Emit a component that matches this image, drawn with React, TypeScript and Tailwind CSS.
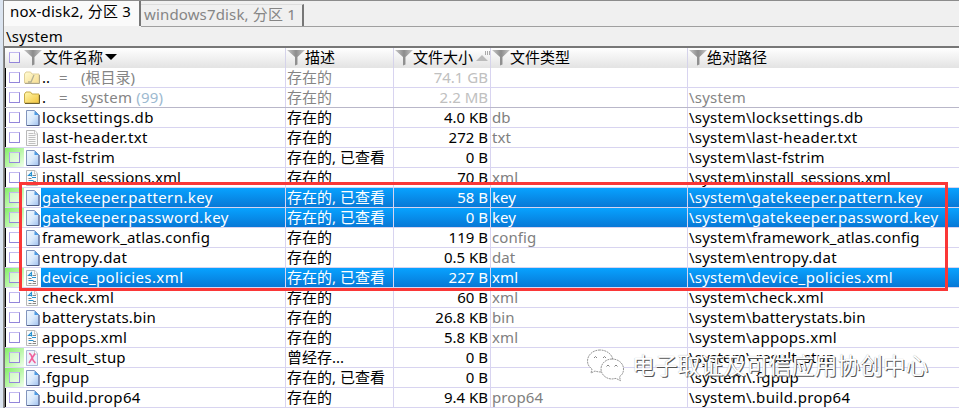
import type { ReactNode } from 'react';

type Kind = 'up' | 'folder' | 'page' | 'text' | 'xml' | 'deleted';
interface Entry {
  name: string;
  kind: Kind;
  size: string;
  type: string;
  tracking?: number;
  state?: string;
  viewed?: boolean;
  selected?: boolean;
  muted?: boolean;
}

const entries: Entry[] = [
  { name: '..', kind: 'up', size: '74.1 GB', type: '', muted: true },
  { name: '.', kind: 'folder', size: '2.2 MB', type: '', muted: true, tracking: 0.15 },
  { name: 'locksettings.db', kind: 'page', size: '4.0 KB', type: 'db', tracking: 0.34 },
  { name: 'last-header.txt', kind: 'text', size: '272 B', type: 'txt', tracking: 0.38 },
  { name: 'last-fstrim', kind: 'page', size: '0 B', type: '', viewed: true, tracking: 0.12 },
  { name: 'install_sessions.xml', kind: 'xml', size: '70 B', type: 'xml', tracking: 0.06 },
  { name: 'gatekeeper.pattern.key', kind: 'page', size: '58 B', type: 'key', viewed: true, selected: true, tracking: 0.39 },
  { name: 'gatekeeper.password.key', kind: 'page', size: '0 B', type: 'key', viewed: true, selected: true, tracking: 0.39 },
  { name: 'framework_atlas.config', kind: 'page', size: '119 B', type: 'config', tracking: 0.16 },
  { name: 'entropy.dat', kind: 'page', size: '0.5 KB', type: 'dat', tracking: 0.38 },
  { name: 'device_policies.xml', kind: 'xml', size: '227 B', type: 'xml', viewed: true, selected: true, tracking: 0.4 },
  { name: 'check.xml', kind: 'xml', size: '60 B', type: 'xml', tracking: 0.25 },
  { name: 'batterystats.bin', kind: 'page', size: '26.8 KB', type: 'bin', tracking: 0.2 },
  { name: 'appops.xml', kind: 'xml', size: '5.8 KB', type: 'xml', tracking: 0.3 },
  { name: '.result_stup', kind: 'deleted', size: '0 B', type: '', state: '曾经存...', viewed: true, tracking: 0.15 },
  { name: '.fgpup', kind: 'page', size: '0 B', type: '', viewed: true, tracking: 0.2 },
  { name: '.build.prop64', kind: 'page', size: '9.4 KB', type: 'prop64', tracking: 0.36 },
];

const columns = 'grid grid-cols-[281px_108px_97px_197px_1fr]';

function Funnel() {
  return (
    <svg width="18" height="17" viewBox="0 0 18 17" className="shrink-0">
      <defs>
        <linearGradient id="funnel" x1="0" x2="1">
          <stop offset="0" stopColor="#c8c8c8" />
          <stop offset=".5" stopColor="#8c8c8c" />
          <stop offset="1" stopColor="#c8c8c8" />
        </linearGradient>
      </defs>
      <path d="M0 1h18l-7.500 7V15.500l-2.500 1V8z" fill="url(#funnel)" />
    </svg>
  );
}

function Check() {
  return <span className="ml-1 size-[11px] shrink-0 border border-[#9284da] border-t-[#c3b9f0] border-l-[#ada0e8] bg-white/50" />;
}

function FileIcon({ kind }: { kind: Kind }) {
  if (kind === 'up' || kind === 'folder') {
    const up = kind === 'up';
    return (
      <svg width="18" height="16" viewBox="0 0 18 16" className="shrink-0" opacity={up ? 0.55 : 1}>
        <defs>
          <linearGradient id="folder" x1="0" x2="1" y1="0" y2="1">
            <stop offset="0" stopColor="#fff9b0" />
            <stop offset="1" stopColor="#f3c43c" />
          </linearGradient>
        </defs>
        <path d="M.5 4l1.500-2h4.500L8 4h7v9H.5z" fill="url(#folder)" stroke="#c8ab48" />
        <path d="M1 13.500h14.500V5" fill="none" stroke="#6d6030" />
        {up && <path d="M4 12h3l3-7" fill="none" stroke="#77713c" strokeWidth="1.300" />}
      </svg>
    );
  }
  const page = kind === 'page';
  return (
    <svg width="14" height="16" viewBox="0 0 14 16" className="ml-[2px] shrink-0">
      <defs>
        <linearGradient id="page" x1="0" x2="1" y1="0" y2="1">
          <stop offset="0" stopColor="#f0f8ff" />
          <stop offset=".5" stopColor="#dcebfc" />
          <stop offset="1" stopColor="#9dbfee" />
        </linearGradient>
      </defs>
      <path
        d={page ? 'M.5.5h8l4.500 4.500v10.500H.5z' : 'M.5.5h8.500l2.500 3v12H.5z'}
        fill={page ? 'url(#page)' : kind === 'deleted' ? '#edf2fc' : '#fafafa'}
        stroke={page ? '#8194bd' : kind === 'deleted' ? '#a9b8d8' : '#b8b8b8'}
      />
      {page && <path d="M1 15.500h12V5" fill="none" stroke="#505f88" />}
      {page
        ? <path d="M8.500 1v4H13z" fill="#4d9be4" />
        : <path d="M8.500.5v3.500h3" fill="#fff" stroke="#b8b8b8" strokeWidth=".8" />}
      {kind === 'text' && <path d="M2.500 3.500h5M2.500 5.500h7M2.500 7.500h7M2.500 9.500h7M2.500 11.500h7M2.500 13.500h7" stroke="#c0c0c0" />}
      {kind === 'xml' && (
        <>
          <path d="M7 5.500h3M7 11.500h3M2.500 13.500h3M6.500 13.500h3.500M2.500 8.500h3" stroke="#777" strokeWidth=".9" />
          <path d="M5.500 6.500V2.500L2.500 5.500h4M6 7.500h4M2.500 10.500h5" fill="none" stroke="#2690d0" strokeWidth="1.100" />
        </>
      )}
      {kind === 'deleted' && <path d="M3 3.500q2 0 3 4t3.500 5.500M9 3.500L3 13" fill="none" stroke="#f0619c" strokeWidth="1.600" />}
    </svg>
  );
}

function Heading({ children, className = '' }: { children: ReactNode; className?: string }) {
  return <div className={`flex h-5 items-center border-r border-[#d5d3ea] pb-[2px] ${className}`}>{children}</div>;
}

function Row({ entry }: { entry: Entry }) {
  const { name, kind, size, type, tracking = 0, state, viewed, selected, muted } = entry;
  const fill = selected ? 'bg-linear-to-b from-[#08a2ff] to-[#0878d6] text-white' : '';
  const cell = `overflow-hidden border-r border-[#d8d4f0] ${fill}`;
  const main = muted ? 'text-[#858585]' : '';
  const spacing = { letterSpacing: tracking };
  return (
    <div className={`${columns} h-5 shrink-0 border-b leading-[19px] ${name === '.' ? 'border-[#b9b7c9]' : 'border-[#d8d4f0]'}`}>
      <div className="flex items-center overflow-hidden border-r border-[#d8d4f0]">
        <div
          className={`flex h-full w-[19px] shrink-0 items-center ${viewed ? 'bg-linear-to-br from-[#80ee65] via-[#b8f7a5] to-[#f2ffee]' : 'border-l border-black'}`}
        >
          <span className={viewed ? 'flex' : '-ml-px flex'}><Check /></span>
        </div>
        <div className="flex w-[17px] shrink-0"><FileIcon kind={kind} /></div>
        <div className={`flex h-full grow pl-px ${fill} ${main}`}>
          {muted ? (
            <>
              <span className="w-[17px] text-black">{name}</span>
              <span className="w-[22px]">=</span>
              {kind === 'up'
                ? <span>(根目录)</span>
                : <span className="tracking-[0.2px]">system <span className="text-[#9db9d0]">(99)</span></span>}
            </>
          ) : <span style={spacing}>{name}</span>}
        </div>
      </div>
      <div className={`${cell} pl-px ${main}`}>{state ?? (viewed ? '存在的, 已查看' : '存在的')}</div>
      <div className={`${cell} pr-[2px] text-right ${muted ? 'text-[#c0c0c0]' : ''}`}>{size}</div>
      <div className={`${cell} pl-px tracking-[0.1px] ${selected ? '' : 'text-[#808080]'}`}>{type}</div>
      <div className={`${fill} overflow-hidden pl-px ${main}`}>
        {kind !== 'up' && (
          <>
            <span className="tracking-[0.2px]">{kind === 'folder' ? '\\system' : '\\system\\'}</span>
            {kind !== 'folder' && <span style={spacing}>{name}</span>}
          </>
        )}
      </div>
    </div>
  );
}

function Watermark() {
  return (
    <div className="absolute top-[348px] left-[586px] flex items-center text-white">
      <svg width="40" height="36" viewBox="0 0 40 36" fill="white" stroke="#8a8a8a" strokeWidth=".9" strokeDasharray="2 .7">
        <path d="M14 2C7 2 1.500 7 1.500 13c0 4 2 6 4.500 8l-1 4 4-2c8 3 18-1 18-10C27 7 21 2 14 2z" />
        <path d="M26 11c-6 0-11 4.500-11 10s5 10 11 10l4-.6 4.500 2.300-1-4c3-2 4-4.500 4-7.700C37.500 15 32 11 26 11z" />
        <g fill="none" stroke="#777" strokeDasharray="none">
          <path d="M8 10q1.500-3 3 0M17 10q1.500-3 3 0M20.500 18.500q1.500-3 3 0M28.500 18.500q1.500-3 3 0" />
        </g>
      </svg>
      <span className="ml-[6px] text-[22.800px] leading-9 whitespace-nowrap [text-shadow:1px_1px_0_#555,0_0_1px_#aaa]">电子取证及可信应用协创中心</span>
    </div>
  );
}

export default function App() {
  return (
    <div className="relative flex h-[408px] w-[959px] overflow-hidden bg-[#f0f0f0] font-['Noto_Sans','Noto_Sans_CJK_SC',sans-serif] text-[15px] whitespace-nowrap text-black">
      <div className="w-[3px] shrink-0 bg-[#dce5f1]" />
      <div className="flex w-[956px] flex-col border-t border-l border-[#8c8c8c]">
        <div className="flex h-[26px] shrink-0 items-end">
          <div className="h-[25px] w-[137px] self-start border-r-2 border-[#777] bg-[#fafafa] pl-[6px] leading-[21px] tracking-[0.2px]">nox-disk2, 分区 3</div>
          <div className="flex h-[26px] grow items-end border-b border-[#a0a0a0]">
            <div className="h-[22px] w-[163px] border-t border-r-2 border-t-[#ddd] border-r-[#777] pl-[3px] leading-[18px] tracking-[0.15px] text-[#858585]">windows7disk, 分区 1</div>
          </div>
        </div>
        <div className="h-[19px] shrink-0 pl-[2px] leading-[19px] tracking-[0.2px]">\system</div>
        <div className="flex grow flex-col border-t-2 border-l border-[#777] bg-white">
          <div className={`${columns} h-5 shrink-0 bg-linear-to-b from-white to-[#e3e3e3]`}>
            <Heading><Check /><span className="mr-px ml-1 flex"><Funnel /></span>文件名称
              <svg width="12" height="6" className="ml-[2px]"><path d="M0 0h12L6 6z" /></svg>
            </Heading>
            <Heading className="pl-px"><Funnel />描述</Heading>
            <Heading className="pl-px"><Funnel />文件大小
              <svg width="15" height="16" className="ml-[3px] shrink-0"><path d="M0 12l6-6 6 6z" fill="#bbb" /><path d="M9.500 2v4M11.500 2v4M13.500 2v4" stroke="#aaa" /></svg>
            </Heading>
            <Heading className="pl-px"><Funnel />文件类型</Heading>
            <div className="flex h-5 items-center pb-[2px] pl-px"><Funnel />绝对路径</div>
          </div>
          {entries.map((entry) => <Row key={entry.name} entry={entry} />)}
        </div>
      </div>
      <div className="absolute top-[182px] left-[19px] h-[109px] w-[929px] border-3 border-[#fa3737]" />
      <Watermark />
    </div>
  );
}
